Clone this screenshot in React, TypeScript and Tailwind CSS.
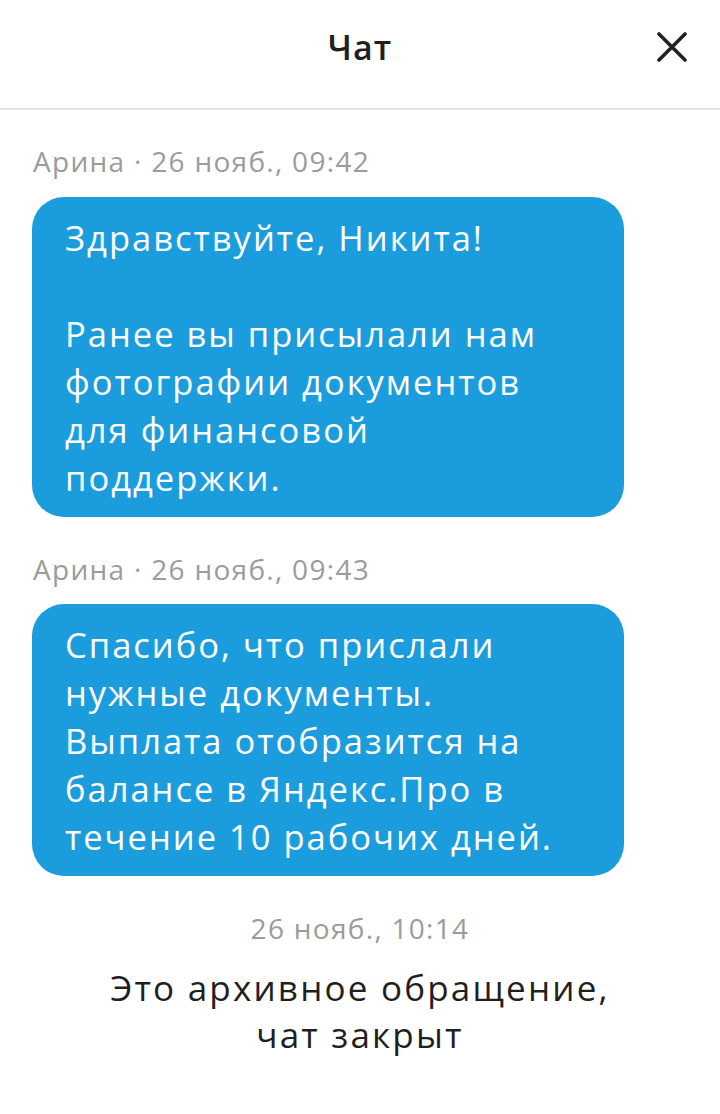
import React from "react";

const font = { fontFamily: '"Open Sans", "Noto Sans", sans-serif' };

function Meta({ children }: { children: React.ReactNode }) {
  return (
    <div className="pl-[33px] text-[28px] leading-[36px] text-[#9b9b9b] tracking-[1.3px]">{children}</div>
  );
}

function Bubble({ lines }: { lines: string[] }) {
  return (
    <div className="ml-[32px] w-[592px] rounded-[32px] bg-[#1b9ddd] pl-[33px] pr-4 pt-[17px] pb-[15px] text-white text-[34.5px] leading-[48px] tracking-[2px]">
      {lines.map((l, i) => (
        <div key={i} className="h-[48px] whitespace-nowrap">{l || "\u00a0"}</div>
      ))}
    </div>
  );
}

export default function App() {
  return (
    <div className="w-[720px] h-[1114px] bg-white overflow-hidden" style={font}>
      <div className="relative h-[110px] border-b-2 border-[#e4e4e4] flex items-center justify-center">
        <div className="text-[34px] font-semibold text-[#1f1f1f] tracking-[1px] -mt-[14px]">Чат</div>
        <div className="absolute right-[33px] top-[32px]">
          <svg width="30" height="30" viewBox="0 0 30 30">
            <path d="M2 2 L28 28 M28 2 L2 28" stroke="#222" strokeWidth="3.6" strokeLinecap="round" />
          </svg>
        </div>
      </div>

      <div className="mt-[33px]">
        <Meta>Арина · 26 нояб., 09:42</Meta>
      </div>
      <div className="mt-[18px]">
        <Bubble
          lines={[
            "Здравствуйте, Никита!",
            "",
            "Ранее вы присылали нам",
            "фотографии документов",
            "для финансовой",
            "поддержки.",
          ]}
        />
      </div>

      <div className="mt-[34px]">
        <Meta>Арина · 26 нояб., 09:43</Meta>
      </div>
      <div className="mt-[17px]">
        <Bubble
          lines={[
            "Спасибо, что прислали",
            "нужные документы.",
            "Выплата отобразится на",
            "балансе в Яндекс.Про в",
            "течение 10 рабочих дней.",
          ]}
        />
      </div>

      <div className="mt-[34px] text-center text-[28px] leading-[36px] text-[#9b9b9b] tracking-[1.3px]">
        26 нояб., 10:14
      </div>
      <div className="mt-[18px] text-center text-[35px] leading-[47px] text-[#1f1f1f] tracking-[2.2px]">
        <div>Это архивное обращение,</div>
        <div>чат закрыт</div>
      </div>
    </div>
  );
}
